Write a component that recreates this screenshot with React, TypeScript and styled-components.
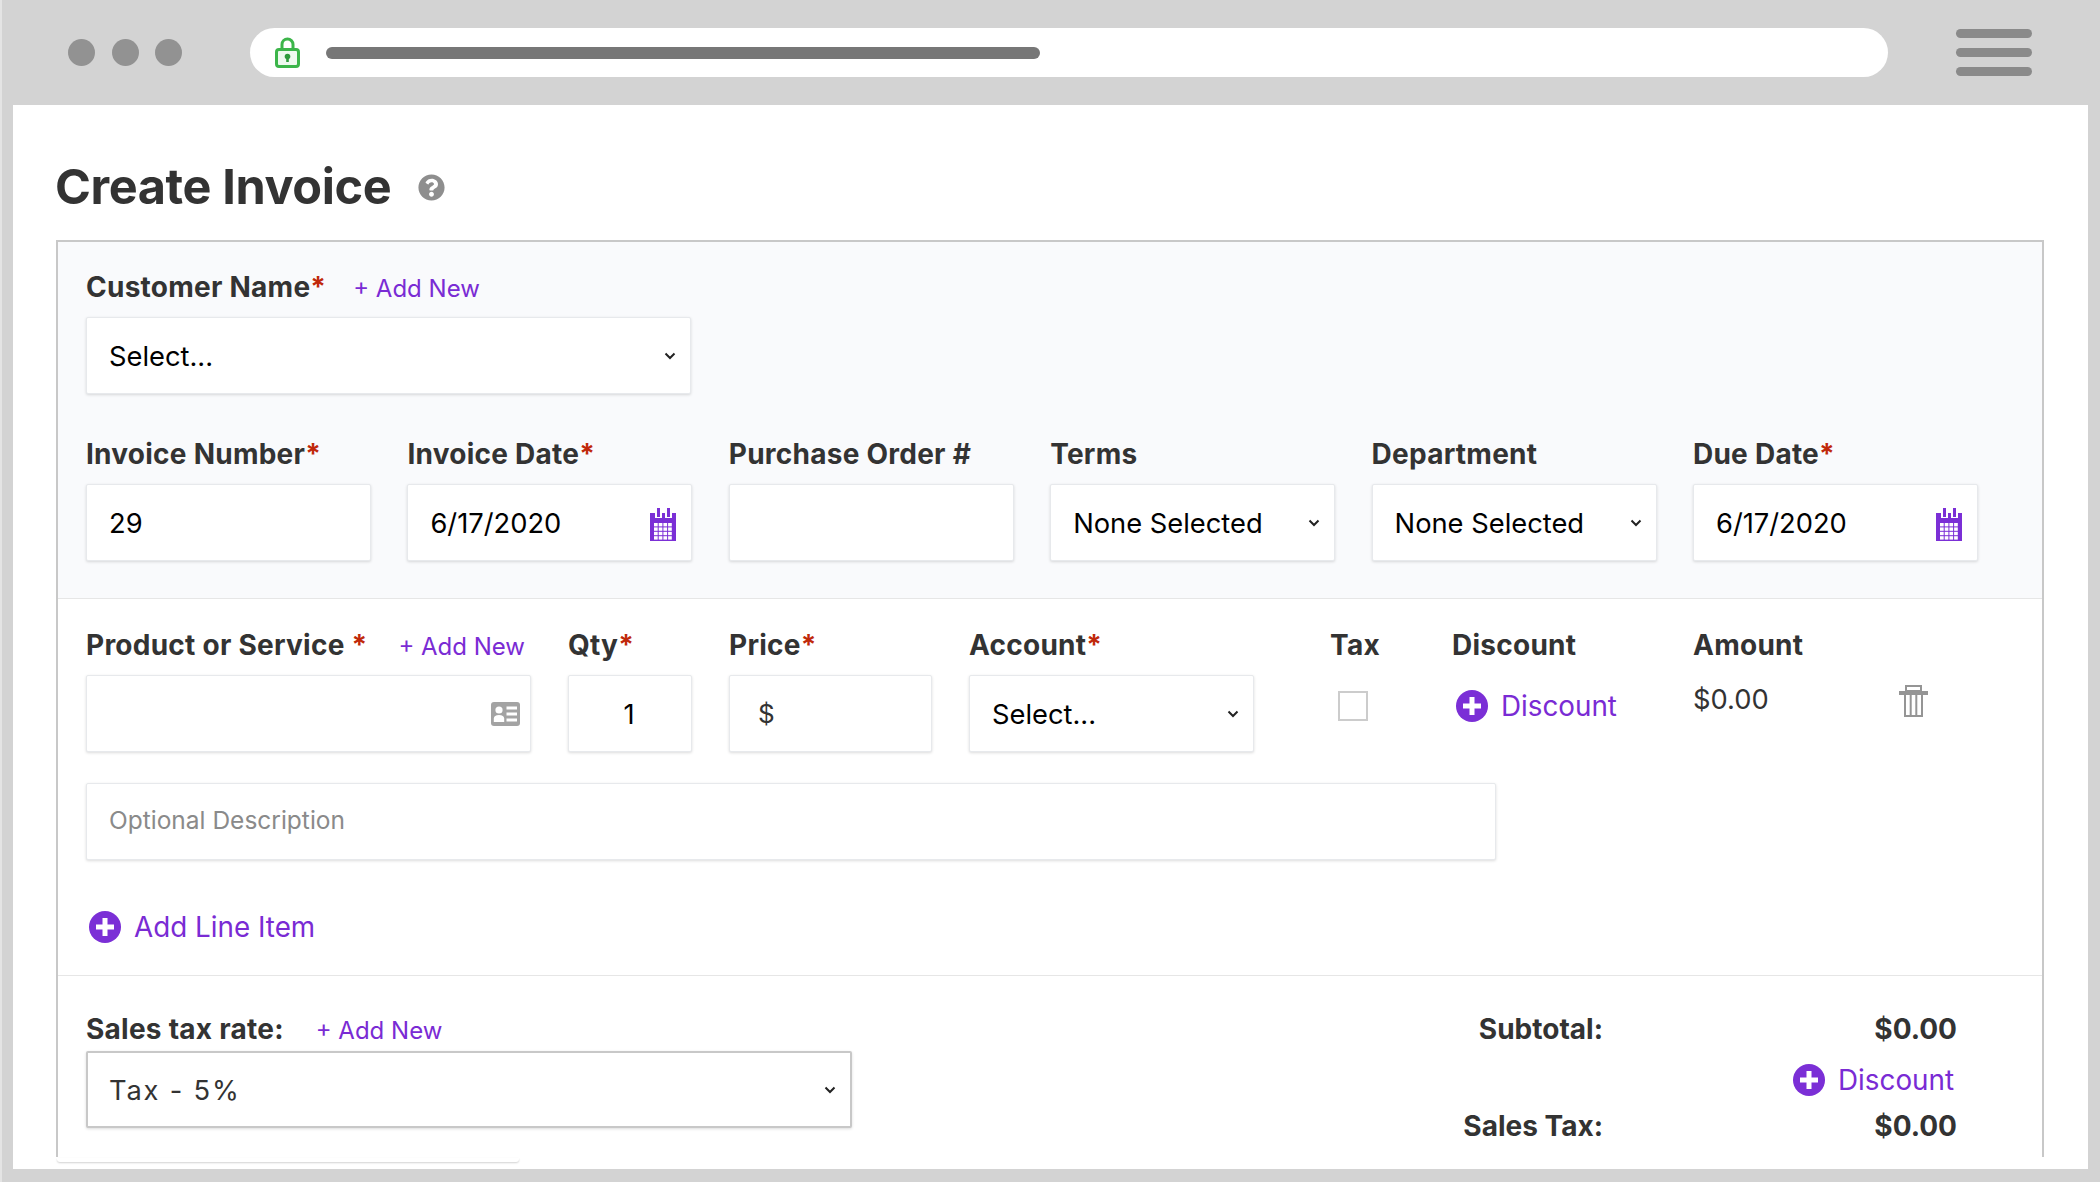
import React from "react";
import styled, { createGlobalStyle } from "styled-components";
import { FaQuestionCircle } from "react-icons/fa";

const GlobalStyle = createGlobalStyle`
  html, body {
    margin: 0;
    padding: 0;
    background: #d3d3d3;
  }
  * {
    box-sizing: border-box;
  }
`;

const Page = styled.div`
  width: 2100px;
  height: 1182px;
  overflow: hidden;
  background: #d3d3d3;
  box-shadow: inset 2px 0 0 #e4e4e4;
  font-family: Inter, "Liberation Sans", sans-serif;
  color: #333333;
`;

const BrowserBar = styled.div`
  height: 105px;
  display: flex;
  align-items: flex-start;
  padding: 28px 68px 0 68px;
`;

const Dots = styled.div`
  display: flex;
  gap: 16.5px;
  margin-top: 11px;
  width: 182px;
`;

const Dot = styled.span`
  width: 27px;
  height: 27px;
  border-radius: 50%;
  background: #929292;
`;

const UrlBar = styled.div`
  width: 1638px;
  height: 49px;
  border-radius: 25px;
  background: #ffffff;
  display: flex;
  align-items: center;
  padding-left: 25px;
  gap: 26px;
`;

const UrlLine = styled.span`
  width: 714px;
  height: 12px;
  border-radius: 6px;
  background: #777777;
`;

const Menu = styled.div`
  margin-left: 68px;
  width: 76px;
  display: flex;
  flex-direction: column;
  gap: 10px;
  padding-top: 1px;
`;

const MenuLine = styled.span`
  height: 9px;
  border-radius: 5px;
  background: #8a8a8a;
`;

const Sheet = styled.div`
  width: 2075px;
  height: 1064px;
  margin-left: 13px;
  background: #ffffff;
  padding: 52px 44px 0 43px;
`;

const TitleRow = styled.div`
  display: flex;
  align-items: center;
  gap: 27px;
  height: 60px;
  margin-bottom: 23px;
`;

const Title = styled.h1`
  margin: 0 0 0 -1px;
  font-size: 48.6px;
  line-height: 60px;
  font-weight: 700;
  letter-spacing: -0.4px;
`;

const HelpIcon = styled(FaQuestionCircle)`
  width: 27px;
  height: 27px;
  color: #8e8e8e;
`;

const Panel = styled.div`
  border: 2px solid #c8c8c8;
  border-bottom: none;
  height: 917px;
`;

const Section = styled.section<{ $shaded?: boolean; $top: number; $bottom: number }>`
  background: ${(p) => (p.$shaded ? "#f9fafc" : "#ffffff")};
  padding: ${(p) => p.$top}px 84px ${(p) => p.$bottom}px 28px;
`;

const SectionLine = styled.div`
  height: 1px;
  background: #e6e6e6;
`;

const LabelRow = styled.div`
  display: flex;
  align-items: center;
  height: 30px;
  margin-bottom: 15px;
`;

const LabelText = styled.label`
  font-size: 28px;
  line-height: 30px;
  font-weight: 700;
  letter-spacing: 0.25px;
  white-space: nowrap;
  color: #333333;
`;

const Star = styled.span`
  color: #c0280a;
`;

const AddLink = styled.a<{ $gap: number }>`
  margin-left: ${(p) => p.$gap}px;
  font-size: 24px;
  color: #7a2bd4;
  white-space: nowrap;
  padding-top: 2px;
`;

const FieldBox = styled.div<{ $width?: number; $outline?: boolean }>`
  width: ${(p) => (p.$width ? `${p.$width}px` : "100%")};
  height: 77px;
  display: flex;
  align-items: center;
  padding: 0 14px 0 ${(p) => (p.$outline ? 21 : 22)}px;
  background: #ffffff;
  border: ${(p) => (p.$outline ? "2px solid #c8c8c8" : "1px solid #e7e9ec")};
  border-radius: 2px;
  box-shadow: 0 1px 3px rgba(0, 0, 0, 0.14);
`;

const FieldInput = styled.input`
  flex: 1;
  min-width: 0;
  border: none;
  outline: none;
  background: transparent;
  padding: 2px 0 0 0;
  font-family: inherit;
  font-size: 27.3px;
  color: #000000;

  &::placeholder {
    color: #8a8a8a;
  }
`;

const DescriptionInput = styled(FieldInput)`
  padding: 0 0 4px 0;
  font-size: 24.5px;
`;

const QtyInput = styled(FieldInput)`
  padding-right: 10px;
  text-align: center;
`;

const FieldSelect = styled.select<{ $spaced?: boolean }>`
  flex: 1;
  min-width: 0;
  appearance: none;
  border: none;
  outline: none;
  background: transparent;
  padding: 2px 0 0 0;
  font-family: inherit;
  font-size: 27.3px;
  color: ${(p) => (p.$spaced ? "#333333" : "#000000")};
  letter-spacing: ${(p) => (p.$spaced ? "1.8px" : "0")};
`;

const Currency = styled.span`
  font-size: 26px;
  color: #333333;
  margin: 0 8px 0 6px;
`;

const HeaderGrid = styled.div`
  display: grid;
  grid-template-columns: repeat(6, 285px);
  column-gap: 36.4px;
  margin-top: 45px;
`;

const LineGrid = styled.div`
  display: grid;
  grid-template-columns: 445px 124px 203px 285px 124px 204px 170px auto;
  column-gap: 37px;
`;

const SpacedRow = styled(LabelRow)`
  justify-content: space-between;
  padding-right: 6px;
`;

const TaxCell = styled.div`
  padding-left: 39px;
`;

const TaxCheck = styled.span`
  display: block;
  width: 30px;
  height: 30px;
  margin: 31px 0 0 8px;
  background: #ffffff;
  border: 2px solid #cccccc;
`;

const ActionLink = styled.a`
  display: flex;
  align-items: center;
  gap: 13px;
  font-size: 27.8px;
  color: #7a2bd4;
  white-space: nowrap;
`;

const DiscountCell = styled.div`
  padding: 14px 0 0 4px;
`;

const AmountValue = styled.div`
  font-size: 27.3px;
  line-height: 30px;
  margin-top: 25px;
`;

const TrashCell = styled.div`
  padding-top: 55px;
  margin-left: -1px;
`;

const DescriptionBox = styled.div`
  width: 1410px;
  margin-top: 31px;
`;

const AddLine = styled.div`
  margin-top: 50px;
  padding-left: 3px;
`;

const FooterRow = styled.div`
  display: flex;
  justify-content: space-between;
  align-items: flex-start;
  height: 115px;
`;

const TaxLabelRow = styled(LabelRow)`
  margin-bottom: 7px;
`;

const SummaryGrid = styled.div`
  display: grid;
  grid-template-columns: 260px 354px;
  margin-right: 1px;
`;

const SummaryText = styled.div<{ $mt?: number }>`
  font-size: 28px;
  line-height: 30px;
  font-weight: 700;
  text-align: right;
  margin-top: ${(p) => p.$mt || 0}px;
`;

const SummaryLink = styled.div`
  grid-column: 2;
  display: flex;
  justify-content: flex-end;
  margin: 19px 3px 0 0;
`;

const TornEdge = styled.div`
  width: 462px;
  height: 4px;
  margin-left: -1px;
  background: #ffffff;
  box-shadow: 0 1px 2px rgba(0, 0, 0, 0.18);
  border-radius: 0 0 3px 3px;
`;

const Chevron = () => (
  <svg width="12" height="8" viewBox="0 0 12 8" style={{ flexShrink: 0 }}>
    <path d="M1.5 1.5 L6 6 L10.5 1.5" fill="none" stroke="#222222" strokeWidth="2" />
  </svg>
);

const PlusCircle = () => (
  <svg width="32" height="32" viewBox="0 0 32 32" style={{ flexShrink: 0 }}>
    <circle cx="16" cy="16" r="16" fill="#7b2fd6" />
    <path d="M13.5 7h5v6.5H25v5h-6.5V25h-5v-6.5H7v-5h6.5z" fill="#ffffff" />
  </svg>
);

const Calendar = () => (
  <svg width="26" height="33" viewBox="0 0 26 33" style={{ flexShrink: 0, margin: "4px 1px 0 0" }}>
    <rect x="0" y="5" width="26" height="28" fill="#7b2fd6" />
    <rect x="5" y="5" width="7" height="5" fill="#ffffff" />
    <rect x="15" y="5" width="7" height="5" fill="#ffffff" />
    <rect x="7" y="0" width="3" height="9" fill="#7b2fd6" />
    <rect x="17" y="0" width="3" height="9" fill="#7b2fd6" />
    {[0, 1, 2, 3].map((r) =>
      [0, 1, 2, 3].map((c) => (
        <rect key={`${r}-${c}`} x={4 + c * 4.7} y={15 + r * 4.4} width="3.7" height="3.4" fill="#ffffff" />
      ))
    )}
  </svg>
);

const Lock = () => (
  <svg width="25" height="31" viewBox="0 0 25 31" style={{ flexShrink: 0 }}>
    <path d="M7 13V7.5a5.5 5.5 0 0 1 11 0V13" fill="none" stroke="#3cb54a" strokeWidth="3" />
    <rect x="1.5" y="12.5" width="22" height="17" rx="2.5" fill="#eef9ef" stroke="#3cb54a" strokeWidth="3" />
    <circle cx="12.5" cy="19.5" r="2.8" fill="#2e9a3c" />
    <rect x="11.2" y="20" width="2.6" height="5" fill="#2e9a3c" />
  </svg>
);

const Trash = () => (
  <svg width="29" height="32" viewBox="0 0 29 32" style={{ display: "block" }}>
    <rect x="7" y="1" width="15" height="5" fill="none" stroke="#959595" strokeWidth="2" />
    <rect x="0" y="6" width="29" height="4" fill="#959595" />
    <path d="M6 10v21h17V10M11.7 10v21M17.3 10v21" fill="none" stroke="#959595" strokeWidth="2" />
  </svg>
);

const CardIcon = () => (
  <svg width="29" height="24" viewBox="0 0 29 24" style={{ flexShrink: 0, marginRight: -4 }}>
    <rect x="0" y="0" width="29" height="24" rx="3" fill="#a3a3a3" />
    <circle cx="8" cy="8" r="3.6" fill="#ffffff" />
    <path d="M2.8 20v-3.5c0-2.3 2-3.5 5.2-3.5s5.2 1.2 5.2 3.5V20z" fill="#ffffff" />
    <rect x="15.5" y="4.5" width="10.5" height="3" fill="#ffffff" />
    <rect x="15.5" y="10.5" width="10.5" height="3" fill="#ffffff" />
    <rect x="15.5" y="16.5" width="10.5" height="3" fill="#ffffff" />
  </svg>
);

const Required = () => <Star>*</Star>;

const SelectField = ({ value }: { value: string }) => (
  <FieldBox>
    <FieldSelect defaultValue={value}>
      <option>{value}</option>
    </FieldSelect>
    <Chevron />
  </FieldBox>
);

const DateField = () => (
  <FieldBox>
    <FieldInput defaultValue="6/17/2020" />
    <Calendar />
  </FieldBox>
);

const App = () => {
  return (
    <Page>
      <GlobalStyle />
      <BrowserBar>
        <Dots>
          <Dot />
          <Dot />
          <Dot />
        </Dots>
        <UrlBar>
          <Lock />
          <UrlLine />
        </UrlBar>
        <Menu>
          <MenuLine />
          <MenuLine />
          <MenuLine />
        </Menu>
      </BrowserBar>
      <Sheet>
        <TitleRow>
          <Title>Create Invoice</Title>
          <HelpIcon />
        </TitleRow>
        <Panel>
          <Section $shaded $top={30} $bottom={37}>
            <LabelRow>
              <LabelText>
                Customer Name
                <Required />
              </LabelText>
              <AddLink $gap={27}>+ Add New</AddLink>
            </LabelRow>
            <FieldBox $width={605}>
              <FieldSelect defaultValue="Select...">
                <option>Select...</option>
              </FieldSelect>
              <Chevron />
            </FieldBox>
            <HeaderGrid>
              <div>
                <LabelRow>
                  <LabelText>
                    Invoice Number
                    <Required />
                  </LabelText>
                </LabelRow>
                <FieldBox>
                  <FieldInput defaultValue="29" />
                </FieldBox>
              </div>
              <div>
                <LabelRow>
                  <LabelText>
                    Invoice Date
                    <Required />
                  </LabelText>
                </LabelRow>
                <DateField />
              </div>
              <div>
                <LabelRow>
                  <LabelText>Purchase Order #</LabelText>
                </LabelRow>
                <FieldBox>
                  <FieldInput />
                </FieldBox>
              </div>
              <div>
                <LabelRow>
                  <LabelText>Terms</LabelText>
                </LabelRow>
                <SelectField value="None Selected" />
              </div>
              <div>
                <LabelRow>
                  <LabelText>Department</LabelText>
                </LabelRow>
                <SelectField value="None Selected" />
              </div>
              <div>
                <LabelRow>
                  <LabelText>
                    Due Date
                    <Required />
                  </LabelText>
                </LabelRow>
                <DateField />
              </div>
            </HeaderGrid>
          </Section>
          <SectionLine />
          <Section $top={31} $bottom={31}>
            <LineGrid>
              <div>
                <SpacedRow>
                  <LabelText>
                    Product or Service <Required />
                  </LabelText>
                  <AddLink $gap={0}>+ Add New</AddLink>
                </SpacedRow>
                <FieldBox>
                  <FieldInput />
                  <CardIcon />
                </FieldBox>
              </div>
              <div>
                <LabelRow>
                  <LabelText>
                    Qty
                    <Required />
                  </LabelText>
                </LabelRow>
                <FieldBox>
                  <QtyInput defaultValue="1" />
                </FieldBox>
              </div>
              <div>
                <LabelRow>
                  <LabelText>
                    Price
                    <Required />
                  </LabelText>
                </LabelRow>
                <FieldBox>
                  <Currency>$</Currency>
                  <FieldInput />
                </FieldBox>
              </div>
              <div>
                <LabelRow>
                  <LabelText>
                    Account
                    <Required />
                  </LabelText>
                </LabelRow>
                <SelectField value="Select..." />
              </div>
              <TaxCell>
                <LabelRow>
                  <LabelText>Tax</LabelText>
                </LabelRow>
                <TaxCheck />
              </TaxCell>
              <div>
                <LabelRow>
                  <LabelText>Discount</LabelText>
                </LabelRow>
                <DiscountCell>
                  <ActionLink>
                    <PlusCircle />
                    Discount
                  </ActionLink>
                </DiscountCell>
              </div>
              <div>
                <LabelRow>
                  <LabelText>Amount</LabelText>
                </LabelRow>
                <AmountValue>$0.00</AmountValue>
              </div>
              <TrashCell>
                <Trash />
              </TrashCell>
            </LineGrid>
            <DescriptionBox>
              <FieldBox>
                <DescriptionInput placeholder="Optional Description" />
              </FieldBox>
            </DescriptionBox>
            <AddLine>
              <ActionLink>
                <PlusCircle />
                Add Line Item
              </ActionLink>
            </AddLine>
          </Section>
          <SectionLine />
          <Section $top={38} $bottom={29}>
            <FooterRow>
              <div>
                <TaxLabelRow>
                  <LabelText>Sales tax rate:</LabelText>
                  <AddLink $gap={32}>+ Add New</AddLink>
                </TaxLabelRow>
                <FieldBox $width={766} $outline>
                  <FieldSelect $spaced defaultValue="Tax - 5%">
                    <option>Tax - 5%</option>
                  </FieldSelect>
                  <Chevron />
                </FieldBox>
              </div>
              <SummaryGrid>
                <SummaryText>Subtotal:</SummaryText>
                <SummaryText>$0.00</SummaryText>
                <SummaryLink>
                  <ActionLink>
                    <PlusCircle />
                    Discount
                  </ActionLink>
                </SummaryLink>
                <SummaryText $mt={14}>Sales Tax:</SummaryText>
                <SummaryText $mt={14}>$0.00</SummaryText>
              </SummaryGrid>
            </FooterRow>
          </Section>
          <TornEdge />
        </Panel>
      </Sheet>
    </Page>
  );
};

export default App;
